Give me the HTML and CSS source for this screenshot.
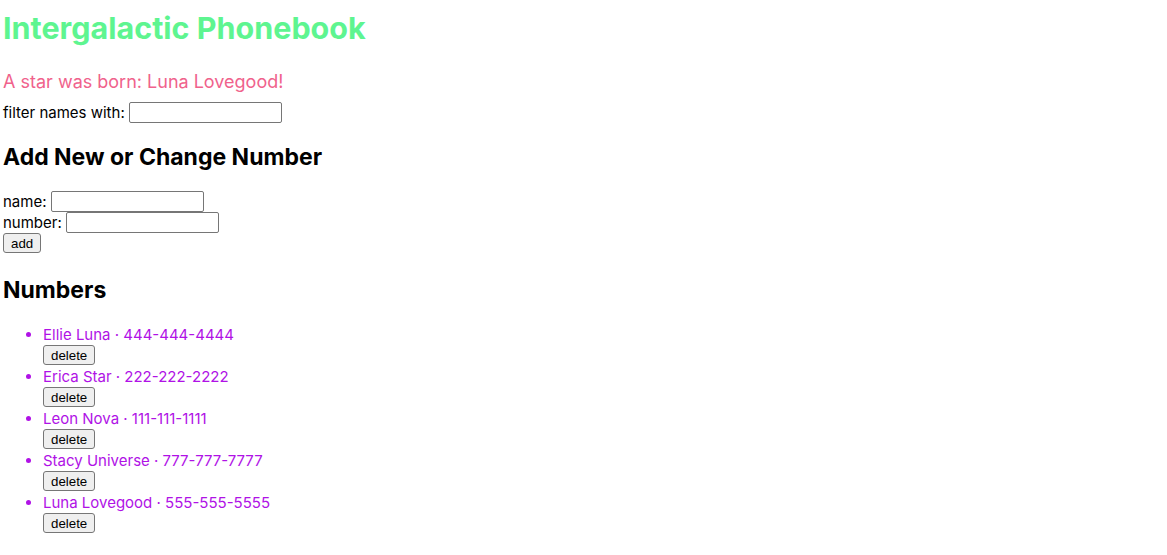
FILE: index.html
```html
<!DOCTYPE html>
<html>
<head>
<meta charset="utf-8">
<title>Phonebook</title>
<link rel="stylesheet" href="styles.css">
</head>
<body>
<div class="app">
  <h1 class="title">Intergalactic Phonebook</h1>
  <div class="notification">A star was born: Luna Lovegood!</div>
  <div class="filter">filter names with: <input class="field" type="text"></div>
  <h2 class="subtitle">Add New or Change Number</h2>
  <form class="person-form">
    <div>name: <input class="field" type="text"></div>
    <div>number: <input class="field" type="text"></div>
    <div><button class="btn" type="button">add</button></div>
  </form>
  <h2 class="subtitle subtitle-numbers">Numbers</h2>
  <ul class="people">
    <li class="person"><div class="person-text">Ellie Luna · 444-444-4444</div><button class="btn" type="button">delete</button></li>
    <li class="person"><div class="person-text">Erica Star · 222-222-2222</div><button class="btn" type="button">delete</button></li>
    <li class="person"><div class="person-text">Leon Nova · 111-111-1111</div><button class="btn" type="button">delete</button></li>
    <li class="person"><div class="person-text">Stacy Universe · 777-777-7777</div><button class="btn" type="button">delete</button></li>
    <li class="person"><div class="person-text">Luna Lovegood · 555-555-5555</div><button class="btn" type="button">delete</button></li>
  </ul>
</div>
</body>
</html>
```

FILE: styles.css
```css
html, body {
  margin: 0;
  padding: 0;
  background: #ffffff;
}
body {
  font-family: Inter, "Liberation Sans", sans-serif;
  font-size: 15px;
  color: #000;
}
.app {
  padding: 0 3px;
}
.title {
  margin: 0;
  padding-top: 8px;
  font-size: 30.5px;
  font-weight: 700;
  color: #5ef590;
  line-height: 40px;
}
.notification {
  margin-top: 22px;
  font-size: 18px;
  line-height: 24px;
  color: #f0628c;
}
.filter {
  margin-top: 8px;
  line-height: 21px;
}
.field {
  box-sizing: border-box;
  width: 153px;
  height: 21px;
  margin: 0;
  padding: 1px 2px;
  border: 1px solid #767676;
  border-radius: 2px;
  background: #fff;
  vertical-align: bottom;
  font: 13px "Liberation Sans", sans-serif;
}
.subtitle {
  margin: 20px 0;
  font-size: 23px;
  font-weight: 700;
  line-height: 28px;
}
.subtitle-numbers {
  margin-top: 22px;
  margin-bottom: 16px;
}
.person-form {
  margin: 0;
  line-height: 21px;
}
.btn {
  box-sizing: border-box;
  height: 20px;
  margin: 0;
  padding: 0 7px;
  border: 1px solid #767676;
  border-radius: 3px;
  background: #efefef;
  color: #000;
  font: 13.3px "Liberation Sans", Arial, sans-serif;
  vertical-align: top;
}
.people {
  margin: 20px 0 0;
  padding-left: 40px;
  color: #b012e6;
}
.person {
  line-height: 21px;
}
.person-text {
  line-height: 21px;
}
```
